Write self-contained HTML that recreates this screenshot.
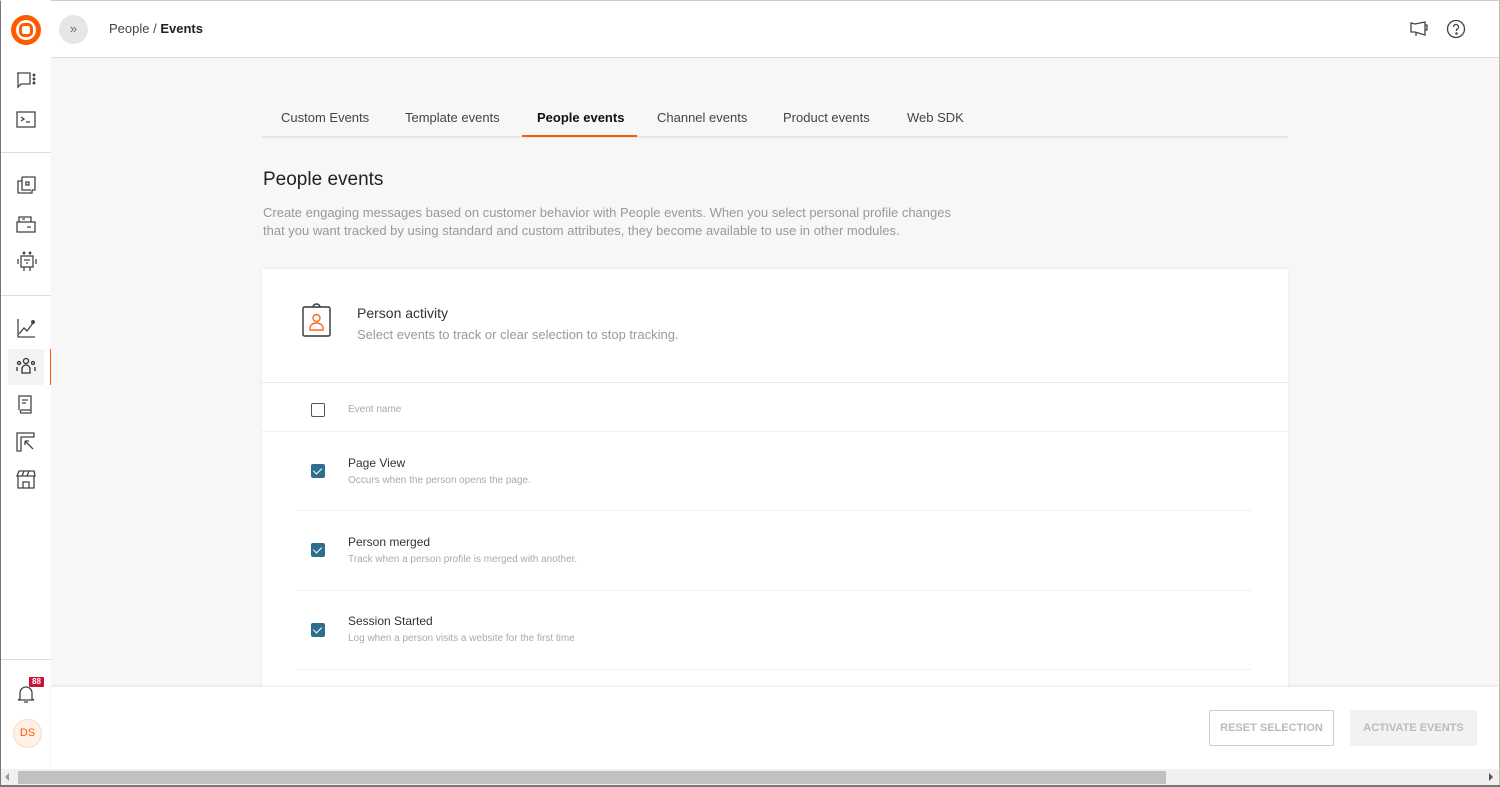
<!DOCTYPE html>
<html><head><meta charset="utf-8"><style>
*{box-sizing:border-box;margin:0;padding:0}
body{width:1500px;height:787px;overflow:hidden;font-family:"Liberation Sans",sans-serif;background:#f7f7f7;position:relative;color:#222}
.abs{position:absolute}
svg{position:absolute}
.tab{position:absolute;top:110px;font-size:13px;color:#444}
.row-t{position:absolute;left:348px;font-size:12px;color:#333}
.row-s{position:absolute;left:348px;font-size:10px;color:#aaa}
.cb{position:absolute;left:311px;width:14px;height:14px;border-radius:2px;background:#2e6f8e}
.cb:after{content:"";position:absolute;left:4px;top:2px;width:4px;height:7px;border:solid #fff;border-width:0 1.5px 1.5px 0;transform:rotate(45deg)}
</style></head><body>
<div class="abs" style="left:0;top:0;width:1px;height:787px;background:#777"></div>
<div class="abs" style="right:0;top:0;width:1px;height:787px;background:#bbb"></div>
<div class="abs" style="left:0;top:0;width:1500px;height:1px;background:#ccc"></div>
<div class="abs" style="left:1px;top:0;width:50px;height:770px;background:#fff"></div>
<div class="abs" style="left:1px;top:152px;width:50px;height:1px;background:#ddd"></div>
<div class="abs" style="left:1px;top:295px;width:50px;height:1px;background:#ddd"></div>
<div class="abs" style="left:1px;top:659px;width:50px;height:1px;background:#ddd"></div>
<div class="abs" style="left:51px;top:1px;width:1448px;height:57px;background:#fff;border-bottom:1px solid #ddd"></div>
<div class="abs" style="left:11px;top:15px;width:30px;height:30px;border-radius:50%;background:#ff5a00"></div>
<div class="abs" style="left:16px;top:20px;width:20px;height:20px;border-radius:50%;background:#fff"></div>
<div class="abs" style="left:19px;top:23px;width:14px;height:14px;border-radius:5px;border:3px solid #ff5a00"></div>
<div class="abs" style="left:59px;top:15px;width:29px;height:29px;border-radius:50%;background:#e6e6e6;font-size:13px;color:#666;text-align:center;line-height:28px">»</div>
<div class="abs" style="left:109px;top:21px;font-size:13px;color:#444">People / <b style="color:#222;font-weight:600">Events</b></div>
<svg style="left:1409px;top:19px" width="22" height="20" viewBox="0 0 22 20" fill="none" stroke="#444" stroke-width="1.3"><path d="M2 4v9h4l10 3V3L6 5z"/><path d="M7 13v4"/><path d="M16 6h2v5h-2"/></svg>
<svg style="left:1446px;top:19px" width="20" height="20" viewBox="0 0 20 20" fill="none" stroke="#444" stroke-width="1.3"><circle cx="10" cy="10" r="8.5"/><path d="M7.5 8a2.5 2.5 0 1 1 3 2.4V12"/><circle cx="10.5" cy="14.5" r=".6" fill="#444"/></svg>
<svg style="left:16px;top:72px" width="22" height="18" viewBox="0 0 22 18" fill="none" stroke="#444" stroke-width="1.3"><path d="M1 1h13v11H5l-3 3V1z"/><circle cx="18" cy="3" r=".8" fill="#444"/><circle cx="18" cy="7" r=".8" fill="#444"/><circle cx="18" cy="11" r=".8" fill="#444"/></svg>
<svg style="left:16px;top:111px" width="20" height="17" viewBox="0 0 20 17" fill="none" stroke="#444" stroke-width="1.3"><rect x="1" y="1" width="18" height="15"/><path d="M5 6l3 2-3 2M10 11h4"/></svg>
<svg style="left:16px;top:176px" width="22" height="20" viewBox="0 0 22 20" fill="none" stroke="#444" stroke-width="1.3"><path d="M6 1h13v13h-3M6 1v13h9"/><path d="M6 5H2v12h14v-3"/><rect x="10" y="6" width="3" height="3"/></svg>
<svg style="left:16px;top:214px" width="22" height="20" viewBox="0 0 22 20" fill="none" stroke="#444" stroke-width="1.3"><path d="M3 8V3h12v5"/><rect x="1" y="8" width="18" height="10"/><path d="M6 5h3M11 13h4"/></svg>
<svg style="left:16px;top:251px" width="22" height="22" viewBox="0 0 22 22" fill="none" stroke="#444" stroke-width="1.3"><rect x="5" y="5" width="12" height="11"/><path d="M2 8v5M20 8v5M8 16v4M14 16v4M8 9h6M10 12h2"/><circle cx="8" cy="2" r=".8" fill="#444"/><circle cx="14" cy="2" r=".8" fill="#444"/></svg>
<svg style="left:16px;top:318px" width="20" height="20" viewBox="0 0 20 20" fill="none" stroke="#444" stroke-width="1.3"><path d="M2 1v18h17"/><path d="M3 16l5-6 3 3 6-8"/><circle cx="17" cy="4" r="1.3" fill="#444"/></svg>
<div class="abs" style="left:8px;top:349px;width:36px;height:36px;background:#f3f3f3;border-radius:2px"></div>
<div class="abs" style="left:50px;top:349px;width:1px;height:36px;background:#ff5a00"></div>
<svg style="left:15px;top:357px" width="22" height="18" viewBox="0 0 22 18" fill="none" stroke="#333" stroke-width="1.3"><circle cx="11" cy="4" r="2.5"/><path d="M7 16v-4a4 4 0 0 1 8 0v4z"/><circle cx="4" cy="6" r="1.5"/><circle cx="18" cy="6" r="1.5"/><path d="M2 14v-4M20 14v-4"/></svg>
<svg style="left:17px;top:394px" width="18" height="20" viewBox="0 0 18 20" fill="none" stroke="#444" stroke-width="1.3"><path d="M2 16V2h12v14H4a2 2 0 0 0 0 3h10v-3"/><path d="M5 6h6M5 9h4"/></svg>
<svg style="left:16px;top:432px" width="20" height="20" viewBox="0 0 20 20" fill="none" stroke="#444" stroke-width="1.3"><path d="M1 1h17v4H5v14H1z"/><path d="M9 9l8 8M9 9v4M9 9h4"/></svg>
<svg style="left:16px;top:470px" width="20" height="20" viewBox="0 0 20 20" fill="none" stroke="#444" stroke-width="1.3"><path d="M1 6L3 1h15l1 5zM2 6v12h16V6M7 18v-6h6v6M6 6l2-5M11 6l2-5"/></svg>
<svg style="left:17px;top:684px" width="18" height="20" viewBox="0 0 18 20" fill="none" stroke="#444" stroke-width="1.3"><path d="M3 15V9a6 6 0 0 1 12 0v6l2 1H1z"/><path d="M7 18h4"/></svg>
<div class="abs" style="left:29px;top:677px;width:15px;height:10px;background:#d0103a;color:#fff;font-size:8px;font-weight:bold;text-align:center;line-height:10px;border-radius:1px">88</div>
<div class="abs" style="left:13px;top:719px;width:29px;height:29px;border-radius:50%;background:#fff1e6;border:1px solid #ffd9c2;color:#ff5a00;font-size:11px;text-align:center;line-height:27px">DS</div>
<div class="tab" style="left:281px">Custom Events</div>
<div class="tab" style="left:405px">Template events</div>
<div class="tab" style="left:537px;color:#111;font-weight:600">People events</div>
<div class="tab" style="left:657px">Channel events</div>
<div class="tab" style="left:783px">Product events</div>
<div class="tab" style="left:907px">Web SDK</div>
<div class="abs" style="left:262px;top:136px;width:1026px;height:2px;background:#e6e6e6"></div>
<div class="abs" style="left:522px;top:135px;width:115px;height:2px;background:#ff5a00"></div>
<div class="abs" style="left:263px;top:169px;font-size:19px;color:#222">People events</div>
<div class="abs" style="left:263px;top:204px;width:712px;font-size:13px;line-height:18px;color:#999">Create engaging messages based on customer behavior with People events. When you select personal profile changes that you want tracked by using standard and custom attributes, they become available to use in other modules.</div>
<div class="abs" style="left:262px;top:269px;width:1026px;height:420px;background:#fff;box-shadow:0 0 3px rgba(0,0,0,.08)"></div>
<svg style="left:302px;top:303px" width="30" height="34" viewBox="0 0 30 34" fill="none"><rect x="1" y="4" width="27" height="29" rx="1.5" stroke="#333" stroke-width="1.4"/><path d="M11 4a3.5 3 0 0 1 7 0" stroke="#333" stroke-width="1.4"/><circle cx="14.5" cy="15" r="3.5" stroke="#ff6a20" stroke-width="1.4"/><path d="M8 27v-2a6.5 5 0 0 1 13 0v2z" stroke="#ff6a20" stroke-width="1.4"/></svg>
<div class="abs" style="left:357px;top:305px;font-size:14px;color:#333">Person activity</div>
<div class="abs" style="left:357px;top:327px;font-size:13px;color:#999">Select events to track or clear selection to stop tracking.</div>
<div class="abs" style="left:262px;top:382px;width:1026px;height:1px;background:#e6e6e6"></div>
<div class="abs" style="left:311px;top:403px;width:14px;height:14px;border:1.3px solid #555;border-radius:2px"></div>
<div class="abs" style="left:348px;top:404px;font-size:10px;color:#aaa">Event name</div>
<div class="abs" style="left:262px;top:431px;width:1026px;height:1px;background:#f0f0f0"></div>
<div class="cb" style="top:464px"></div>
<div class="row-t" style="top:456px">Page View</div>
<div class="row-s" style="top:475px">Occurs when the person opens the page.</div>
<div class="abs" style="left:297px;top:510px;width:954px;height:1px;background:#f0f0f0"></div>
<div class="cb" style="top:543px"></div>
<div class="row-t" style="top:535px">Person merged</div>
<div class="row-s" style="top:554px">Track when a person profile is merged with another.</div>
<div class="abs" style="left:297px;top:590px;width:954px;height:1px;background:#f0f0f0"></div>
<div class="cb" style="top:623px"></div>
<div class="row-t" style="top:614px">Session Started</div>
<div class="row-s" style="top:633px">Log when a person visits a website for the first time</div>
<div class="abs" style="left:297px;top:669px;width:954px;height:1px;background:#f0f0f0"></div>
<div class="abs" style="left:51px;top:687px;width:1448px;height:82px;background:#fff;box-shadow:0 -1px 3px rgba(0,0,0,.08)"></div>
<div class="abs" style="left:1209px;top:710px;width:125px;height:36px;border:1px solid #ccc;border-radius:2px;color:#bbb;font-size:11px;font-weight:bold;text-align:center;line-height:34px">RESET SELECTION</div>
<div class="abs" style="left:1350px;top:710px;width:127px;height:36px;background:#f2f2f2;border-radius:2px;color:#bbb;font-size:11px;font-weight:bold;text-align:center;line-height:36px">ACTIVATE EVENTS</div>
<div class="abs" style="left:1px;top:769px;width:1498px;height:16px;background:#f0f0f0"></div>
<div class="abs" style="left:18px;top:771px;width:1148px;height:13px;background:#c1c1c1"></div>
<div class="abs" style="left:5px;top:773px;width:0;height:0;border:4px solid transparent;border-right-color:#999;border-left:0"></div>
<div class="abs" style="left:1489px;top:773px;width:0;height:0;border:4px solid transparent;border-left-color:#555;border-right:0"></div>
<div class="abs" style="left:0;top:785px;width:1500px;height:2px;background:#777"></div>
</body></html>
